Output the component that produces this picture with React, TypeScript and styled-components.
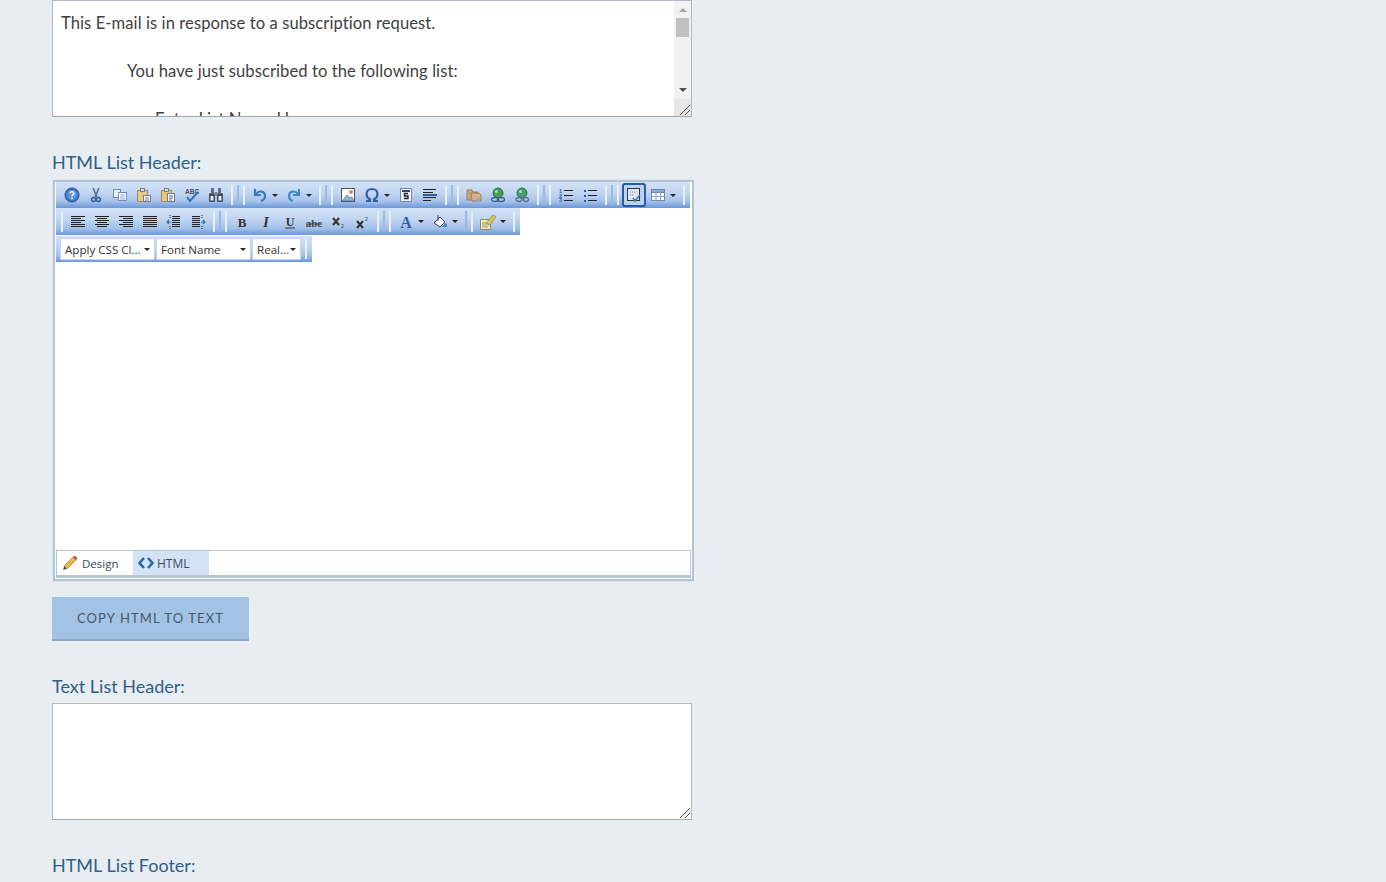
import React from "react";
import styled, { createGlobalStyle } from "styled-components";

const GlobalStyle = createGlobalStyle`
  html, body {
    margin: 0;
    padding: 0;
    height: 882px;
    overflow: hidden;
    background: #e8edf2;
  }
`;

const Page = styled.div`
  width: 642px;
  height: 882px;
  overflow: hidden;
  margin-left: 52px;
  font-family: "Lato", "Liberation Sans", sans-serif;
`;

const TextBox = styled.div<{ $height: number }>`
  position: relative;
  box-sizing: border-box;
  width: 640px;
  height: ${(p) => p.$height}px;
  background: #fff;
  border: 1px solid #b4b8c6;
  border-bottom-color: #a3a6ad;
  overflow: hidden;
`;

const BoxText = styled.div`
  padding: 10px 8px;
  font-size: 16.6px;
  line-height: 24px;
  letter-spacing: 0.07px;
  color: #3f3f3f;
`;

const BoxLine = styled.p<{ $indent?: number }>`
  margin: 0 0 24px;
  padding-left: ${(p) => p.$indent ?? 0}px;
  white-space: nowrap;
`;

const ScrollBar = styled.div`
  position: absolute;
  top: 0;
  right: 0;
  bottom: 0;
  width: 17px;
  background: #f1f1f1;
  display: flex;
  flex-direction: column;
  align-items: center;
`;

const ScrollArrow = styled.div<{ $up?: boolean; $dim?: boolean }>`
  width: 0;
  height: 0;
  margin: ${(p) => (p.$up ? "7px 0 6px" : "auto 0 24px")};
  border-left: 4px solid transparent;
  border-right: 4px solid transparent;
  ${(p) =>
    p.$up
      ? `border-bottom: 4px solid ${p.$dim ? "#a3a3a3" : "#505050"};`
      : `border-top: 4px solid #505050;`}
`;

const ScrollThumb = styled.div`
  width: 13px;
  height: 19px;
  background: #c1c1c1;
`;

const ResizeCorner = styled.svg`
  position: absolute;
  right: 0;
  bottom: 0;
  width: 17px;
  height: 17px;
`;

const CornerFill = styled.div`
  position: absolute;
  right: 0;
  bottom: 0;
  width: 17px;
  height: 17px;
  background: #e6e6e6;
`;

const FieldLabel = styled.div<{ $gap: number }>`
  margin: 34px 0 ${(p) => p.$gap}px;
  height: 23px;
  line-height: 23px;
  font-size: 18px;
  color: #2e5f87;
`;

const Editor = styled.div`
  box-sizing: border-box;
  width: 641px;
  height: 401px;
  margin-left: 1px;
  background: #fff;
  border: 2px solid #b3c4d8;
  outline: 1px solid #dfe5ec;
  display: flex;
  flex-direction: column;
`;

const Toolbars = styled.div`
  margin-left: 1px;
  display: flex;
  flex-direction: column;
  align-items: flex-start;
  height: 366px;
`;

const bar = `linear-gradient(180deg, #d3e2f6 0%, #c2d6f1 40%, #a4c1ea 75%, #6b97da 100%)`;

const ToolRow = styled.div<{ $width: number; $pad: number; $top?: number; $height?: number }>`
  box-sizing: border-box;
  width: ${(p) => p.$width}px;
  height: ${(p) => p.$height ?? 26}px;
  margin-top: ${(p) => p.$top ?? 0}px;
  padding-left: ${(p) => p.$pad}px;
  background: ${bar};
  display: flex;
  align-items: center;
  flex-shrink: 0;
`;

const ToolButton = styled.div<{ $caret?: boolean; $active?: boolean }>`
  box-sizing: border-box;
  width: ${(p) => (p.$caret ? 34 : 24)}px;
  height: 24px;
  padding-left: 4px;
  display: flex;
  align-items: center;
  flex-shrink: 0;
  border-radius: 3px;
  ${(p) =>
    p.$active
      ? `border: 2px solid #2a5ba8; padding-left: 2px; background: #bcd3f2;`
      : ""}
`;

const Caret = styled.span`
  width: 0;
  height: 0;
  margin-left: 4px;
  border-left: 3px solid transparent;
  border-right: 3px solid transparent;
  border-top: 3px solid #222;
`;

const Sep = styled.div<{ $width?: number }>`
  position: relative;
  align-self: stretch;
  width: ${(p) => p.$width ?? 20}px;
  flex-shrink: 0;
  &::before {
    content: "";
    position: absolute;
    left: 3px;
    top: 3px;
    bottom: 3px;
    width: 2px;
    background: #e8f0fb;
  }
  &::after {
    content: "";
    position: absolute;
    right: 3px;
    top: 3px;
    bottom: 3px;
    width: 2px;
    background: #e8f0fb;
    box-shadow: -6px 0 0 0 #9db8de;
  }
`;

const RowEdge = styled.div<{ $lead?: boolean }>`
  width: 2px;
  height: 20px;
  margin: ${(p) => (p.$lead ? "0 3px 0 0" : "0 0 0 3px")};
  background: #e8f0fb;
  flex-shrink: 0;
`;

const Select = styled.div<{ $width: number }>`
  box-sizing: border-box;
  width: ${(p) => p.$width}px;
  height: 22px;
  margin-right: 1px;
  padding: 0 4px;
  background: #fff;
  border: 1px solid #c9d5e4;
  display: flex;
  align-items: center;
  justify-content: space-between;
  font-family: "Open Sans", "Liberation Sans", sans-serif;
  font-size: 11.6px;
  color: #333;
  white-space: nowrap;
  flex-shrink: 0;
`;

const TabBar = styled.div`
  box-sizing: border-box;
  height: 28px;
  margin: auto 0 1px 1px;
  width: 635px;
  border: 1px solid #b8c6d6;
  border-bottom: 3px solid #b8c6d6;
  padding-left: 1px;
  display: flex;
  background: #fff;
`;

const Tab = styled.div<{ $active?: boolean }>`
  box-sizing: border-box;
  width: ${(p) => (p.$active ? 75 : 76)}px;
  padding-left: ${(p) => (p.$active ? 4 : 5)}px;
  display: flex;
  align-items: center;
  gap: ${(p) => (p.$active ? 4 : 3)}px;
  background: ${(p) => (p.$active ? "#fff" : "#d3e2f5")};
  font-family: "Open Sans", "Liberation Sans", sans-serif;
  font-size: ${(p) => (p.$active ? 11.5 : 12)}px;
  color: #3a4a5c;
`;

const CopyButton = styled.div`
  box-sizing: border-box;
  width: 197px;
  height: 44px;
  margin-top: 16px;
  padding-bottom: 1px;
  background: #a3c3e4;
  border-bottom: 2px solid #8ba8c6;
  display: flex;
  align-items: center;
  justify-content: center;
  font-size: 13px;
  letter-spacing: 1.1px;
  color: #44586e;
`;

const Glyph = styled.svg`
  width: 16px;
  height: 16px;
  flex-shrink: 0;
  display: block;
`;

const BlueLetter = styled.text<{ $size: number }>`
  font-family: "Liberation Serif", serif;
  font-size: ${(p) => p.$size}px;
  font-weight: 700;
  fill: #2f5f9f;
`;

const Lines = ({ widths }: { widths: [number, number][] }) => (
  <>
    {widths.map(([x, w], i) => (
      <rect key={i} x={x} y={2 + i * 2} width={w} height={1} fill="#222" />
    ))}
  </>
);

const icons: Record<string, React.ReactNode> = {
  help: (
    <>
      <circle cx="8" cy="8" r="7" fill="#3e74c4" stroke="#1f4f98" />
      <circle cx="8" cy="8" r="5" fill="#5b90dc" />
      <path d="M6 6.2c.3-2 4-2 4 0 0 1.4-2 1.4-2 3" fill="none" stroke="#fff" strokeWidth="1.4" />
      <rect x="7.2" y="10.5" width="1.6" height="1.6" fill="#fff" />
    </>
  ),
  cut: (
    <>
      <path d="M5 1l4 9M11 1L7 10" stroke="#5a6a85" strokeWidth="1.5" fill="none" />
      <circle cx="5.5" cy="12.5" r="2" fill="none" stroke="#2f5f9f" strokeWidth="1.5" />
      <circle cx="10.5" cy="12.5" r="2" fill="none" stroke="#2f5f9f" strokeWidth="1.5" />
    </>
  ),
  copy: (
    <>
      <rect x="1.5" y="2.5" width="7" height="8" fill="#e9f0fa" stroke="#6b8fc4" />
      <rect x="6.5" y="5.5" width="8" height="8" fill="#fff" stroke="#6b8fc4" />
      <path d="M8 8h5M8 10h5M8 12h5" stroke="#8aa5cc" />
    </>
  ),
  paste: (
    <>
      <rect x="1.5" y="3.5" width="10" height="11" fill="#e6c98a" stroke="#a88a4e" />
      <rect x="4.5" y="1.5" width="4" height="3" fill="#d8dde6" stroke="#77808f" />
      <rect x="7.5" y="8.5" width="7" height="6" fill="#fff" stroke="#6f7a8c" />
      <path d="M9 11h4M9 13h4" stroke="#6f7a8c" />
    </>
  ),
  pasteText: (
    <>
      <rect x="1.5" y="3.5" width="10" height="11" fill="#e9c77e" stroke="#a88a4e" />
      <rect x="4.5" y="1.5" width="4" height="3" fill="#d8dde6" stroke="#77808f" />
      <rect x="7.5" y="6.5" width="7" height="8" fill="#fff" stroke="#6f7a8c" />
      <path d="M9 9h4M9 11h4M9 13h3" stroke="#4f6a96" />
    </>
  ),
  spell: (
    <>
      <text x="1" y="6.5" fontFamily="Liberation Sans, sans-serif" fontSize="6.5" fontWeight="700" fill="#4a4a60">
        ABC
      </text>
      <path d="M3 10l3 4 8-9" fill="none" stroke="#2f6fb5" strokeWidth="2" />
    </>
  ),
  find: (
    <>
      <rect x="1" y="6" width="6" height="9" rx="1.5" fill="#3f4a60" />
      <rect x="9" y="6" width="6" height="9" rx="1.5" fill="#3f4a60" />
      <rect x="3" y="1" width="3" height="6" fill="#5f6c84" />
      <rect x="10" y="1" width="3" height="6" fill="#5f6c84" />
      <rect x="6.5" y="5" width="3" height="4" fill="#7d87a0" />
      <rect x="2.5" y="9" width="3" height="4.500" fill="#e6ecf6" />
      <rect x="10.500" y="9" width="3" height="4.500" fill="#e6ecf6" />
    </>
  ),
  undo: <path d="M3 2v6h6M4 7c3-4 9-3 9 2 0 2-1 4-4 5" fill="none" stroke="#3d78bf" strokeWidth="2.2" />,
  redo: <path d="M13 2v6H7M12 7C9 3 3 4 3 9c0 2 1 4 4 5" fill="none" stroke="#3d8bbf" strokeWidth="2.2" />,
  image: (
    <>
      <rect x="1.5" y="1.5" width="13" height="13" fill="#fdfdfd" stroke="#555" />
      <circle cx="11" cy="5" r="1.8" fill="#d8734e" />
      <path d="M2 14l5-6 3 3 2-1 2 4z" fill="#8fb2d8" stroke="#466a96" strokeWidth=".6" />
    </>
  ),
  omega: <path d="M2 14h4v-1.5C3.500 11 2.500 9 2.500 7c0-3 2.500-5 5.500-5s5.500 2 5.500 5c0 2-1 4-3.500 5.500V14h4" fill="none" stroke="#2f5f9f" strokeWidth="2.200" />,
  template: (
    <>
      <rect x="2.500" y="1.500" width="11" height="13" fill="#eef3fa" stroke="#6f87a8" />
      <rect x="4" y="3" width="8" height="2" fill="#445" />
      <path d="M10 6.500H6.500V9H10v2.500H6" fill="none" stroke="#223" strokeWidth="1.400" />
    </>
  ),
  paragraph: (
    <>
      <path d="M1 2.500h13M1 5.500h10" stroke="#222" />
      <rect x="1" y="7" width="14" height="2" fill="#2f5f9f" />
      <path d="M1 10.500h13M1 13.500h8" stroke="#222" />
    </>
  ),
  folder: (
    <>
      <path d="M1 3h5l1 2h5v8H1z" fill="#c9a27c" stroke="#a17d5c" />
      <path d="M5 6h8l2 2v6H6z" fill="#d9b08a" stroke="#a17d5c" />
      <circle cx="12" cy="13" r="2" fill="#8ea7c7" />
    </>
  ),
  link: (
    <>
      <circle cx="8" cy="6" r="5" fill="#4a9d56" stroke="#2e7a3e" />
      <circle cx="6.500" cy="4.500" r="1.500" fill="#a8dcae" />
      <ellipse cx="5" cy="12.500" rx="3.500" ry="2" fill="none" stroke="#3d5e8e" strokeWidth="1.300" />
      <ellipse cx="11" cy="12.500" rx="3.500" ry="2" fill="none" stroke="#3d5e8e" strokeWidth="1.300" />
    </>
  ),
  unlink: (
    <>
      <circle cx="8" cy="6" r="5" fill="#4a9d6e" stroke="#2e7a4e" />
      <circle cx="6.500" cy="4.500" r="1.500" fill="#a8dcbe" />
      <ellipse cx="5" cy="12.500" rx="3" ry="2" fill="none" stroke="#5a6e8e" strokeWidth="1.300" />
      <ellipse cx="12" cy="12.500" rx="2.500" ry="2" fill="none" stroke="#5a6e8e" strokeWidth="1.300" />
    </>
  ),
  ol: (
    <>
      <text x="1" y="6" fontFamily="Liberation Sans, sans-serif" fontSize="5.500" fontWeight="700" fill="#2f5f9f">1</text>
      <text x="1" y="10.500" fontFamily="Liberation Sans, sans-serif" fontSize="5.500" fontWeight="700" fill="#2f5f9f">2</text>
      <text x="1" y="15" fontFamily="Liberation Sans, sans-serif" fontSize="5.500" fontWeight="700" fill="#2f5f9f">3</text>
      <path d="M6 3.500h9M6 8.500h9M6 13.500h9" stroke="#222" />
    </>
  ),
  ul: (
    <>
      <rect x="2" y="3" width="2" height="2" fill="#2f5f9f" />
      <rect x="2" y="8" width="2" height="2" fill="#2f5f9f" />
      <rect x="2" y="13" width="2" height="2" fill="#2f5f9f" />
      <path d="M6 3.500h9M6 8.500h9M6 13.500h9" stroke="#222" />
    </>
  ),
  toggle: (
    <>
      <rect x="1.500" y="1.500" width="12" height="12" fill="#dbe6f6" stroke="#333" />
      <path d="M4 5h6M4 8h4" stroke="#7d8da6" strokeDasharray="1 1" />
      <path d="M7 11l2 3 5-6" fill="none" stroke="#3d6fb0" strokeWidth="1.500" />
    </>
  ),
  table: (
    <>
      <rect x="1.500" y="2.500" width="13" height="11" fill="#f4f7fc" stroke="#6f87a8" />
      <rect x="1.500" y="2.500" width="13" height="3" fill="#8aa9d4" stroke="#6f87a8" />
      <path d="M6 5.500v8M10.500 5.500v8M2 9.500h12" stroke="#8da3c2" />
    </>
  ),
  left: <Lines widths={[[1, 14], [1, 10], [1, 14], [1, 10], [1, 14], [1, 14]]} />,
  center: <Lines widths={[[1, 14], [3, 10], [1, 14], [3, 10], [1, 14], [3, 10]]} />,
  right: <Lines widths={[[1, 14], [5, 10], [1, 14], [5, 10], [1, 14], [5, 10]]} />,
  justify: <Lines widths={[[1, 14], [1, 14], [1, 14], [1, 14], [1, 14], [1, 14]]} />,
  outdent: (
    <>
      <Lines widths={[[6, 8], [6, 8], [6, 8], [6, 8], [6, 8], [6, 8]]} />
      <path d="M5 8H1M3 6L1 8l2 2" fill="none" stroke="#2f6fb5" strokeWidth="1.200" />
      <path d="M4 1v3M4 12v3" stroke="#222" strokeDasharray="1 1" />
    </>
  ),
  indent: (
    <>
      <Lines widths={[[2, 8], [2, 8], [2, 8], [2, 8], [2, 8], [2, 8]]} />
      <path d="M11 8h4M13 6l2 2-2 2" fill="none" stroke="#2f6fb5" strokeWidth="1.200" />
      <path d="M12 1v3M12 12v3" stroke="#222" strokeDasharray="1 1" />
    </>
  ),
  bold: (
    <text x="8" y="13" textAnchor="middle" fontFamily="Liberation Serif, serif" fontSize="13" fontWeight="700" fill="#333">
      B
    </text>
  ),
  italic: (
    <text x="8" y="13" textAnchor="middle" fontFamily="Liberation Serif, serif" fontSize="14" fontStyle="italic" fontWeight="700" fill="#333">
      I
    </text>
  ),
  underline: (
    <>
      <text x="8" y="12" textAnchor="middle" fontFamily="Liberation Serif, serif" fontSize="12" fontWeight="700" fill="#333">
        U
      </text>
      <rect x="3" y="13.500" width="10" height="1" fill="#333" />
    </>
  ),
  strike: (
    <>
      <text x="8" y="13" textAnchor="middle" fontFamily="Liberation Serif, serif" fontSize="11" fontWeight="700" fill="#444">
        abc
      </text>
      <rect x="0" y="9.500" width="16" height="1" fill="#444" />
    </>
  ),
  sub: (
    <>
      <path d="M3 4l6 7M9 4l-6 7" stroke="#333" strokeWidth="2" />
      <text x="11" y="14" fontFamily="Liberation Sans, sans-serif" fontSize="5" fill="#333">2</text>
    </>
  ),
  sup: (
    <>
      <path d="M3 7l6 7M9 7l-6 7" stroke="#333" strokeWidth="2" />
      <text x="11" y="7" fontFamily="Liberation Sans, sans-serif" fontSize="5" fill="#333">2</text>
    </>
  ),
  fontColor: (
    <BlueLetter $size={16} x="8" y="13.500" textAnchor="middle">
      A
    </BlueLetter>
  ),
  fill: (
    <>
      <path d="M2 9l6-6 5 5-5 5z" fill="#f4f7fc" stroke="#445" />
      <path d="M6 1v6" stroke="#445" />
      <path d="M10 13h5v-3l-2-1z" fill="#3d8bd0" />
    </>
  ),
  brush: (
    <>
      <path d="M0.500 5.500h10v10h-10z" fill="#f5e9b8" stroke="#8b8b6e" />
      <path d="M2 9h7M2 11h7M2 13h6" stroke="#9a9a80" />
      <path d="M6 9l7-8 3 1.500-6 8.500z" fill="#d9c24e" stroke="#6f7a8c" strokeWidth=".6" />
    </>
  ),
};

const Tool = ({ name, caret, active }: { name: string; caret?: boolean; active?: boolean }) => (
  <ToolButton $caret={caret} $active={active}>
    <Glyph viewBox="0 0 16 16">{icons[name]}</Glyph>
    {caret && <Caret />}
  </ToolButton>
);

const Pencil = () => (
  <Glyph viewBox="0 0 16 16">
    <path d="M1.500 14.500l1-4L11 2l3 3-8.500 8.500z" fill="#e9b548" stroke="#a9782a" strokeWidth=".6" />
    <path d="M11 2l3 3 1.500-1.500L12.500.5z" fill="#a04a5a" />
    <path d="M1.500 14.500l1-3 2 2z" fill="#333" />
  </Glyph>
);

const CodeMark = () => (
  <Glyph viewBox="0 0 16 16">
    <path d="M6 3L1.500 8 6 13M10 3l4.500 5L10 13" fill="none" stroke="#1f6aa5" strokeWidth="2.600" />
  </Glyph>
);

const row1 = [
  ["help", "cut", "copy", "paste", "pasteText", "spell", "find"],
  ["undo*", "redo*"],
  ["image", "omega*", "template", "paragraph"],
  ["folder", "link", "unlink"],
  ["ol", "ul"],
];

const row2 = [
  ["left", "center", "right", "justify", "outdent", "indent"],
  ["bold", "italic", "underline", "strike", "sub", "sup"],
  ["fontColor*", "fill*"],
  ["brush*"],
];

const renderGroup = (names: string[]) =>
  names.map((n) => <Tool key={n} name={n.replace("*", "")} caret={n.endsWith("*")} />);

const SmallCaret = styled(Caret)`
  margin-left: 0;
`;

export default function App() {
  return (
    <Page>
      <GlobalStyle />
      <TextBox $height={117}>
        <BoxText>
          <BoxLine>This E-mail is in response to a subscription request.</BoxLine>
          <BoxLine $indent={66}>You have just subscribed to the following list:</BoxLine>
          <BoxLine $indent={94}>Enter List Name Here</BoxLine>
        </BoxText>
        <ScrollBar>
          <ScrollArrow $up $dim />
          <ScrollThumb />
          <ScrollArrow />
        </ScrollBar>
        <CornerFill />
        <ResizeCorner viewBox="0 0 17 17">
          <path d="M16 6L6 16M16 11l-5 5" stroke="#555" fill="none" />
        </ResizeCorner>
      </TextBox>

      <FieldLabel $gap={6}>HTML List Header:</FieldLabel>
      <Editor>
        <Toolbars>
          <ToolRow $width={634} $pad={4}>
            {row1.map((g, i) => (
              <React.Fragment key={i}>
                {renderGroup(g)}
                <Sep />
              </React.Fragment>
            ))}
            <Tool name="toggle" active />
            <Tool name="table" caret />
            <RowEdge />
          </ToolRow>
          <ToolRow $width={464} $pad={5} $height={27}>
            <RowEdge $lead />
            {row2.map((g, i) => (
              <React.Fragment key={i}>
                {renderGroup(g)}
                {i < row2.length - 1 ? <Sep $width={i === 2 ? 14 : 20} /> : <RowEdge />}
              </React.Fragment>
            ))}
          </ToolRow>
          <ToolRow $width={256} $pad={4} $top={1}>
            <Select $width={95}>
              Apply CSS Cl...
              <SmallCaret />
            </Select>
            <Select $width={95}>
              Font Name
              <SmallCaret />
            </Select>
            <Select $width={49}>
              Real...
              <SmallCaret />
            </Select>
            <RowEdge />
          </ToolRow>
        </Toolbars>
        <TabBar>
          <Tab $active>
            <Pencil />
            Design
          </Tab>
          <Tab>
            <CodeMark />
            HTML
          </Tab>
        </TabBar>
      </Editor>
      <CopyButton>COPY HTML TO TEXT</CopyButton>

      <FieldLabel $gap={5}>Text List Header:</FieldLabel>
      <TextBox $height={117}>
        <ResizeCorner viewBox="0 0 17 17">
          <path d="M16 6L6 16M16 11l-5 5" stroke="#555" fill="none" />
        </ResizeCorner>
      </TextBox>

      <FieldLabel $gap={5}>HTML List Footer:</FieldLabel>
    </Page>
  );
}
